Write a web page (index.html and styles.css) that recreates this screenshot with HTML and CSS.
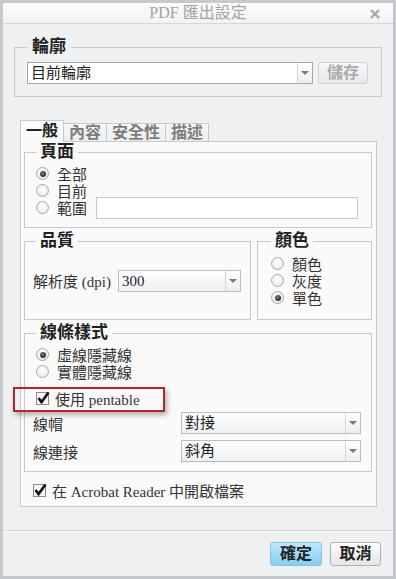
FILE: index.html
```html
<!DOCTYPE html>
<html lang="zh-Hant">
  <head>
    <meta charset="UTF-8" />
    <meta name="viewport" content="width=device-width, initial-scale=1.0" />
    <title>PDF 匯出設定</title>
    <link rel="stylesheet" href="styles.css">
  </head>
  <body>
    <div class="dialog">
      <div class="titlebar">
        <span class="title">PDF 匯出設定</span>
        <span class="close">
          <svg width="10" height="10" viewBox="0 0 10 10">
            <path d="M1 1 L9 9 M9 1 L1 9" stroke="#a9a9a9" stroke-width="2.4" />
          </svg>
        </span>
      </div>

      <div class="content">
        <fieldset class="group profile">
          <legend>輪廓</legend>
          <div class="profile-row">
            <div class="combo combo-white">
              <span class="combo-text">目前輪廓</span>
              <span class="combo-arrow"></span>
            </div>
            <button class="btn btn-disabled">儲存</button>
          </div>
        </fieldset>

        <div class="tabs">
          <div class="tab-bar">
            <span class="tab active">一般</span>
            <span class="tab">內容</span>
            <span class="tab">安全性</span>
            <span class="tab">描述</span>
          </div>
          <div class="tab-panel">
            <fieldset class="group page">
              <legend>頁面</legend>
              <div class="radio-row"><span class="radio on"></span>全部</div>
              <div class="radio-row"><span class="radio"></span>目前</div>
              <div class="radio-row"><span class="radio"></span>範圍<span class="range-input"></span></div>
            </fieldset>

            <div class="row2">
              <fieldset class="group quality">
                <legend>品質</legend>
                <div class="quality-row">
                  <span class="field-label">解析度 (dpi)</span>
                  <div class="combo quality-select">
                    <span class="combo-text">300</span>
                    <span class="combo-arrow"></span>
                  </div>
                </div>
              </fieldset>
              <fieldset class="group color">
                <legend>顏色</legend>
                <div class="radio-row"><span class="radio"></span>顏色</div>
                <div class="radio-row"><span class="radio"></span>灰度</div>
                <div class="radio-row"><span class="radio on"></span>單色</div>
              </fieldset>
            </div>

            <fieldset class="group lines">
              <legend>線條樣式</legend>
              <div class="radio-row"><span class="radio on"></span>虛線隱藏線</div>
              <div class="radio-row"><span class="radio"></span>實體隱藏線</div>
              <div class="check-row">
                <svg class="check" width="13" height="13" viewBox="0 0 13 13">
                  <rect x="0.5" y="0.5" width="12" height="12" fill="#f7f7f7" stroke="#8c8c8c" />
                  <path d="M2.5 6 L5.5 10 L12.5 0.5" fill="none" stroke="#111" stroke-width="2.6" />
                </svg>
                使用 pentable
              </div>
              <div class="line-row">
                <span class="line-label">線帽</span>
                <div class="combo line-select">
                  <span class="combo-text">對接</span>
                  <span class="combo-arrow"></span>
                </div>
              </div>
              <div class="line-row">
                <span class="line-label">線連接</span>
                <div class="combo line-select">
                  <span class="combo-text">斜角</span>
                  <span class="combo-arrow"></span>
                </div>
              </div>
            </fieldset>

            <div class="check-row acrobat">
              <svg class="check" width="13" height="13" viewBox="0 0 13 13">
                <rect x="0.5" y="0.5" width="12" height="12" fill="#f7f7f7" stroke="#8c8c8c" />
                <path d="M2.5 6 L5.5 10 L12.5 0.5" fill="none" stroke="#111" stroke-width="2.6" />
              </svg>
              在 Acrobat Reader 中開啟檔案
            </div>

            <div class="highlight"></div>
          </div>
        </div>
      </div>

      <div class="footer">
        <button class="btn btn-primary">確定</button>
        <button class="btn btn-cancel">取消</button>
      </div>
    </div>
  </body>
</html>
```

FILE: styles.css
```css
* {
  box-sizing: border-box;
}
body {
  margin: 0;
  background-color: #c5c8cc;
  font-family: "Liberation Serif", "Noto Sans CJK TC", serif;
  color: #333;
}
.dialog {
  width: 396px;
  height: 579px;
  border: 3px solid #c5c8cc;
  background-color: #eef0f2;
  display: flex;
  flex-direction: column;
}
.titlebar {
  height: 21px;
  border-bottom: 1px solid #d3d6da;
  background: linear-gradient(#fdfdfd, #f1f2f4);
  display: flex;
  align-items: center;
  justify-content: center;
  position: relative;
}
.title {
  font-size: 16px;
  line-height: 20px;
  color: #a3a3a3;
}
.close {
  position: absolute;
  right: 13px;
  top: 6px;
  display: flex;
}
.content {
  flex: 1;
  padding: 13px 11px 0;
}

/* fieldsets */
.group {
  margin: 0;
  border: 1px solid #c6c9cd;
  min-width: 0;
}
.group legend {
  font-size: 17px;
  line-height: 20px;
  font-weight: 700;
  color: #222;
  padding: 0 4px;
  margin-left: 3px;
}
.profile {
  padding: 5px 13px 12px 12px;
}
.profile legend {
  padding: 0 5px;
  margin-left: 0;
}
.profile-row {
  display: flex;
  gap: 5px;
}

/* combo boxes */
.combo {
  display: flex;
  height: 22px;
  border: 1px solid #b9bcc0;
  background: linear-gradient(#ffffff, #eff0f2);
}
.combo-white {
  flex: 1;
  border-color: #a5a8ac;
  background: #fff;
}
.combo-text {
  flex: 1;
  padding-left: 3px;
  font-size: 15px;
  line-height: 20px;
  color: #222;
}
.combo-arrow {
  width: 15px;
  border-left: 1px solid #d3d5d8;
  background: linear-gradient(#ffffff, #eceef0);
  display: flex;
  align-items: center;
  justify-content: center;
}
.combo-arrow::before {
  content: "";
  border-left: 4px solid transparent;
  border-right: 4px solid transparent;
  border-top: 4px solid #7a7a7a;
}

/* buttons */
.btn {
  height: 24px;
  padding: 0;
  border-radius: 3px;
  font-family: "Liberation Serif", "Noto Sans CJK TC", serif;
  font-size: 16px;
  font-weight: 700;
  line-height: 20px;
  cursor: pointer;
}
.btn-disabled {
  width: 50px;
  height: 22px;
  border: 1px solid #cfd1d4;
  background: linear-gradient(#f7f7f8, #e8e9eb);
  color: #a9abae;
}
.btn-primary {
  width: 52px;
  border: 1px solid #82c3e6;
  background: linear-gradient(#c0e7fc, #86cdf3);
  color: #222;
}
.btn-cancel {
  width: 51px;
  border: 1px solid #aeb0b3;
  background: linear-gradient(#fdfdfd, #e4e5e7);
  color: #222;
}

/* tabs */
.tabs {
  margin: 23px 5px 0 6px;
}
.tab-bar {
  display: flex;
  align-items: flex-end;
  height: 22px;
  margin-bottom: -1px;
  position: relative;
  z-index: 1;
}
.tab {
  height: 18px;
  margin-bottom: 1px;
  margin-right: -1px;
  padding: 0 5px;
  border: 1px solid #c6c9cd;
  border-bottom: none;
  background: linear-gradient(#f7f7f8, #eceef0);
  font-size: 16px;
  font-weight: 700;
  line-height: 17px;
  color: #7d7d7d;
}
.tab.active {
  height: 22px;
  margin-bottom: 0;
  background: #fafafa;
  color: #222;
  line-height: 20px;
}
.tab-panel {
  border: 1px solid #c6c9cd;
  background-color: #fafafa;
  padding: 0 4px 7px 3px;
  position: relative;
}

/* radios and checks */
.radio-row {
  display: flex;
  align-items: center;
  height: 17px;
  gap: 8px;
  margin-left: 3px;
  font-size: 15px;
  color: #333;
}
.radio {
  width: 13px;
  height: 13px;
  flex: none;
  border-radius: 50%;
  border: 1px solid #a9a9a9;
  background: radial-gradient(circle at 50% 35%, #ffffff, #e4e4e4);
  display: flex;
  align-items: center;
  justify-content: center;
}
.radio.on::after {
  content: "";
  width: 6px;
  height: 6px;
  border-radius: 50%;
  background: radial-gradient(circle at 40% 35%, #777, #111);
}
.check-row {
  display: flex;
  align-items: center;
  height: 17px;
  gap: 6px;
  margin: 10px 0 0 3px;
  font-size: 15px;
  color: #333;
}
.check {
  flex: none;
  overflow: visible;
}

/* page group */
.page {
  padding: 3px 13px 11px 8px;
}
.range-input {
  flex: 1;
  height: 22px;
  margin-left: 1px;
  border: 1px solid #c6c9cd;
  background: #fff;
}

/* quality and color */
.row2 {
  display: flex;
  gap: 6px;
  margin-top: 3px;
}
.quality {
  width: 227px;
  padding: 4px 9px 13px 8px;
}
.quality-row {
  height: 51px;
  display: flex;
  align-items: center;
  justify-content: space-between;
}
.field-label {
  font-size: 15px;
  color: #333;
}
.quality-select {
  width: 123px;
}
.color {
  flex: 1;
  padding: 4px 10px 13px 10px;
}

/* line style group */
.lines {
  margin-top: 3px;
  padding: 3px 10px 9px 8px;
}
.line-row {
  display: flex;
  align-items: center;
  height: 22px;
  margin-top: 6px;
}
.check-row + .line-row {
  margin-top: 5px;
}
.line-label {
  width: 148px;
  font-size: 15px;
  color: #333;
}
.line-select {
  flex: 1;
}
.acrobat {
  margin-left: 9px;
}

/* red callout over the pentable option */
.highlight {
  position: absolute;
  left: -8px;
  top: 245px;
  width: 152px;
  height: 25px;
  border: 2px solid #b3262b;
  box-shadow: 2px 3px 5px rgba(0, 0, 0, 0.3);
}

/* footer */
.footer {
  border-top: 1px solid #d3d6da;
  box-shadow: inset 0 1px #fafbfc;
  padding: 11px 12px 10px;
  display: flex;
  justify-content: flex-end;
  gap: 8px;
}
```
